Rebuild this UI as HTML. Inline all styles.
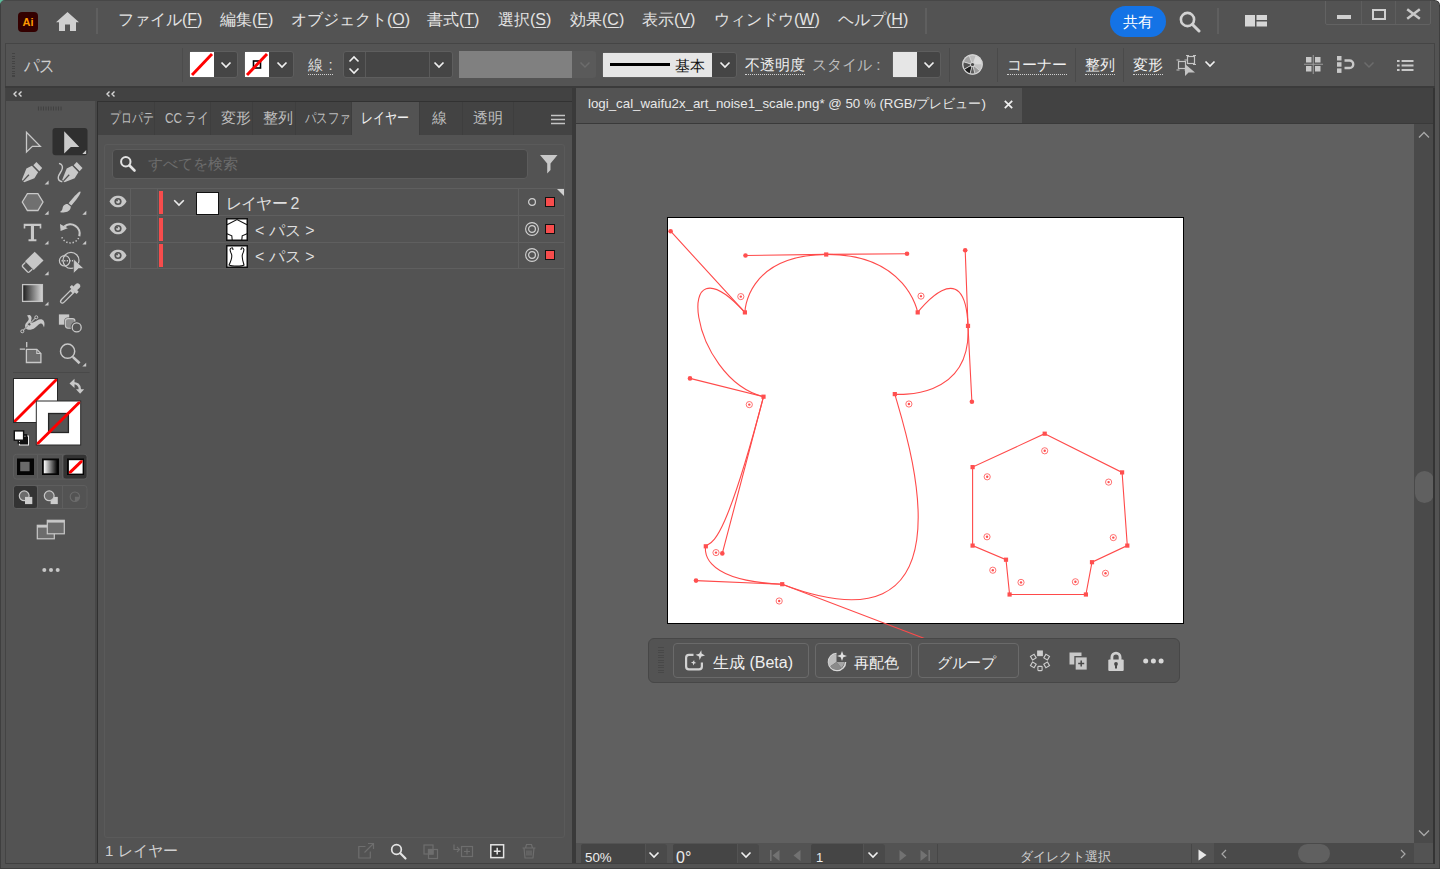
<!DOCTYPE html>
<html lang="ja">
<head>
<meta charset="utf-8">
<title>Adobe Illustrator</title>
<style>
*{box-sizing:border-box;margin:0;padding:0}
html,body{width:1440px;height:869px;overflow:hidden;background:#535353}
body{font-family:"Liberation Sans",sans-serif;color:#d6d6d6;font-size:15px;position:relative}
.abs{position:absolute}
#win{position:absolute;left:0;top:0;width:1440px;height:869px;background:#535353;overflow:hidden}
/* menu bar */
#menubar{position:absolute;left:0;top:0;width:1440px;height:43px;background:#535353}
.mi{position:absolute;top:9px;height:22px;line-height:22px;font-size:16px;color:#e4e4e4;white-space:nowrap}
.mi u{text-decoration:underline;text-underline-offset:2px}
/* control bar */
#ctrl{position:absolute;left:5px;top:43px;width:1430px;height:43px;background:#545454;border-top:1px solid #454545;border-left:1px solid #464646}
.ct{position:absolute;white-space:nowrap;font-size:15px;line-height:20px;height:20px;top:11px;color:#e6e6e6}
.dot{border-bottom:1px dotted #d0d0d0;padding-bottom:1px}
.dd{position:absolute;background:#454545}
.vsep{position:absolute;width:1px;background:#4a4a4a}
/* docks */
#dockhead{position:absolute;left:5px;top:86px;width:568px;height:15px;background:#424242}
#tools{position:absolute;left:6px;top:101px;width:89px;height:763px;background:#535353}
#lpanel{position:absolute;left:98px;top:101px;width:474px;height:763px;background:#535353}
#ptabs{position:absolute;left:0;top:0;width:474px;height:34px;background:#434343}
.pt{position:absolute;top:0;height:34px;line-height:33px;font-size:15px;color:#bdbdbd;white-space:nowrap;overflow:hidden;border-right:1px solid #3e3e3e;padding-left:12px}
.pt.sel{background:#535353;color:#f0f0f0;border-right:none}
/* doc */
#doc{position:absolute;left:576px;top:87px;width:858px;height:777px;background:#606060}
#doctabs{position:absolute;left:0;top:0;width:858px;height:37px;background:#424242;border-bottom:1px solid #3a3a3a}
#doctab{position:absolute;left:0;top:0;width:446px;height:36px;background:#535353;font-size:13.300px;color:#e8e8e8;line-height:34px;padding-left:12px;white-space:nowrap}
#artboard{position:absolute;left:91px;top:130px;width:517px;height:407px;background:#fff;border:1px solid #000}
#status{position:absolute;left:0;top:756px;width:858px;height:21px;background:#535353}
#vscroll{position:absolute;left:838px;top:37px;width:19px;height:719px;background:#4a4a4a}
#hscroll{position:absolute;left:638px;top:756px;width:200px;height:21px;background:#4a4a4a}
.tb{border:1px solid #6a6a6a;border-radius:4px}
.tt{top:13px;font-size:15px;line-height:22px;color:#f0f0f0;white-space:nowrap}
.sf{top:1px;height:20px;background:#454545;border-radius:2px 0 0 0}
.sb{top:1px;width:21px;height:20px;background:#4a4a4a;border-radius:0 3px 0 0}
.st{white-space:nowrap;color:#ececec;line-height:18px}
.sq{display:inline-block;transform-origin:0 50%;white-space:nowrap}
</style>
</head>
<body>
<div id="win">
<div id="menubar">
  <!-- Ai logo -->
  <div class="abs" style="left:18px;top:12px;width:20px;height:20px;border-radius:4px;background:#330000;color:#ff9a00;font-weight:bold;font-size:11px;line-height:20px;text-align:center;letter-spacing:0">Ai</div>
  <!-- home -->
  <svg class="abs" style="left:55px;top:11px" width="25" height="21" viewBox="0 0 25 21"><path d="M12.5 1 L1 11.2 L4 11.2 L4 20 L10 20 L10 13.5 L15 13.5 L15 20 L21 20 L21 11.2 L24 11.2 Z" fill="#cfcfcf"/></svg>
  <div class="vsep" style="left:96px;top:8px;height:26px;width:2px;background:#5f5f5f"></div>
  <div class="mi" style="left:118px">ファイル(<u>F</u>)</div>
  <div class="mi" style="left:220px">編集(<u>E</u>)</div>
  <div class="mi" style="left:291px">オブジェクト(<u>O</u>)</div>
  <div class="mi" style="left:427px">書式(<u>T</u>)</div>
  <div class="mi" style="left:498px">選択(<u>S</u>)</div>
  <div class="mi" style="left:570px">効果(<u>C</u>)</div>
  <div class="mi" style="left:642px">表示(<u>V</u>)</div>
  <div class="mi" style="left:714px">ウィンドウ(<u>W</u>)</div>
  <div class="mi" style="left:838px">ヘルプ(<u>H</u>)</div>
  <div class="vsep" style="left:925px;top:8px;height:26px;width:2px;background:#5f5f5f"></div>
  <!-- share -->
  <div class="abs" style="left:1110px;top:6px;width:56px;height:31px;border-radius:16px;background:#1473e6;color:#fff;font-size:15px;line-height:31px;text-align:center">共有</div>
  <!-- search -->
  <svg class="abs" style="left:1178px;top:10px" width="23" height="23" viewBox="0 0 23 23"><circle cx="9.5" cy="9.5" r="6.6" fill="none" stroke="#d2d2d2" stroke-width="2.6"/><path d="M14.5 14.5 L21 21" stroke="#d2d2d2" stroke-width="3" stroke-linecap="round"/></svg>
  <div class="vsep" style="left:1217px;top:8px;height:26px;width:2px;background:#5f5f5f"></div>
  <!-- workspace -->
  <svg class="abs" style="left:1245px;top:15px" width="22" height="12" viewBox="0 0 22 12"><rect x="0" y="0" width="10" height="11.5" fill="#d6d6d6"/><rect x="11.5" y="0" width="10.5" height="5" fill="#d6d6d6"/><rect x="11.5" y="6.5" width="10.5" height="5" fill="#d6d6d6"/></svg>
  <!-- window controls -->
  <div class="abs" style="left:1325px;top:-2px;width:106px;height:27px;border:1px solid #626262;border-radius:0 0 2px 2px"></div>
  <div class="vsep" style="left:1361px;top:0;height:24px;background:#5e5e5e"></div>
  <div class="vsep" style="left:1395px;top:0;height:24px;background:#5e5e5e"></div>
  <div class="abs" style="left:1337px;top:15px;width:14px;height:4px;background:#cfcfcf"></div>
  <div class="abs" style="left:1372px;top:9px;width:14px;height:11px;border:2.5px solid #cfcfcf"></div>
  <svg class="abs" style="left:1406px;top:8px" width="15" height="12" viewBox="0 0 15 12"><path d="M1.200 1.300L13.800 10.700M13.800 1.300L1.200 10.700" stroke="#c8c8c8" stroke-width="2.500"/></svg>
</div>

<div id="ctrl">
  <!-- grip (coords relative to ctrl: x-6, y-44) -->
  <div class="abs" style="left:6px;top:9px;width:3px;height:24px;background:repeating-linear-gradient(to bottom,#434343 0,#434343 1px,transparent 1px,transparent 2.500px)"></div>
  <div class="ct" style="left:18px;top:11.5px;font-size:17.500px;color:#cdcdcd;transform:scaleX(.86);transform-origin:0 50%">パス</div>
  <div class="vsep" style="left:176px;top:4px;height:34px;background:#4c4c4c"></div>
  <!-- fill swatch -->
  <div class="abs" style="left:183px;top:7px;width:49px;height:27px;border:1px solid #5e5e5e;border-radius:3px;background:#454545"></div>
  <svg class="abs" style="left:184px;top:8px" width="24" height="25" viewBox="0 0 24 25"><rect width="24" height="25" fill="#fff"/><path d="M2 23 L22 2" stroke="#ff0000" stroke-width="2.900"/></svg>
  <svg class="abs" style="left:214px;top:17px" width="12" height="8" viewBox="0 0 12 8"><path d="M1.5 1.5 L6 6 L10.5 1.5" fill="none" stroke="#f0f0f0" stroke-width="1.7"/></svg>
  <!-- stroke swatch -->
  <div class="abs" style="left:238px;top:7px;width:50px;height:27px;border:1px solid #5e5e5e;border-radius:3px;background:#454545"></div>
  <svg class="abs" style="left:239px;top:8px" width="24" height="25" viewBox="0 0 24 25"><rect width="24" height="25" fill="#fff"/><rect x="8.5" y="9" width="7" height="7" fill="none" stroke="#000" stroke-width="1.6"/><path d="M2 23 L22 2" stroke="#ff0000" stroke-width="2.900"/></svg>
  <svg class="abs" style="left:270px;top:17px" width="12" height="8" viewBox="0 0 12 8"><path d="M1.5 1.5 L6 6 L10.5 1.5" fill="none" stroke="#f0f0f0" stroke-width="1.7"/></svg>
  <!-- stroke label -->
  <div class="ct" style="left:302px;top:11px;color:#dedede"><span class="dot">線&nbsp;&#8202;:</span></div>
  <!-- spinner -->
  <div class="abs" style="left:337px;top:7px;width:110px;height:27px;border:1px solid #5e5e5e;border-radius:3px;background:#454545"></div>
  <div class="vsep" style="left:359px;top:8px;height:25px;background:#5a5a5a"></div>
  <div class="vsep" style="left:423px;top:8px;height:25px;background:#5a5a5a"></div>
  <svg class="abs" style="left:342px;top:11px" width="12" height="20" viewBox="0 0 12 20"><path d="M1.5 6.5 L6 2 L10.5 6.5 M1.5 13.5 L6 18 L10.5 13.5" fill="none" stroke="#f0f0f0" stroke-width="1.6"/></svg>
  <svg class="abs" style="left:427px;top:17px" width="12" height="8" viewBox="0 0 12 8"><path d="M1.5 1.5 L6 6 L10.5 1.5" fill="none" stroke="#f0f0f0" stroke-width="1.7"/></svg>
  <!-- gray box -->
  <div class="abs" style="left:453px;top:7px;width:113px;height:27px;background:#808080"></div>
  <div class="abs" style="left:566px;top:7px;width:24px;height:27px;background:#5a5a5a;border-radius:0 3px 3px 0"></div>
  <svg class="abs" style="left:573px;top:17px" width="12" height="8" viewBox="0 0 12 8"><path d="M1.5 1.5 L6 6 L10.5 1.5" fill="none" stroke="#6c6c6c" stroke-width="1.5"/></svg>
  <!-- brush profile -->
  <div class="abs" style="left:596px;top:8px;width:135px;height:26px;border:1px solid #5e5e5e;border-radius:3px;background:#454545"></div>
  <div class="abs" style="left:597px;top:9px;width:109px;height:24px;background:#e6e6e6"></div>
  <div class="abs" style="left:604px;top:19px;width:60px;height:3px;background:#000"></div>
  <div class="ct" style="left:669px;top:12px;color:#111">基本</div>
  <svg class="abs" style="left:713px;top:17px" width="12" height="8" viewBox="0 0 12 8"><path d="M1.5 1.5 L6 6 L10.5 1.5" fill="none" stroke="#f0f0f0" stroke-width="1.7"/></svg>
  <!-- opacity -->
  <div class="ct" style="left:739px;top:11px;color:#efefef"><span class="dot">不透明度</span></div>
  <div class="ct" style="left:806px;top:11px;color:#bdbdbd;font-size:15.3px">スタイル :</div>
  <div class="abs" style="left:886px;top:7px;width:49px;height:27px;border:1px solid #5e5e5e;border-radius:3px;background:#454545"></div>
  <div class="abs" style="left:887px;top:8px;width:24px;height:25px;background:#e6e6e6"></div>
  <svg class="abs" style="left:917px;top:17px" width="12" height="8" viewBox="0 0 12 8"><path d="M1.5 1.5 L6 6 L10.5 1.5" fill="none" stroke="#f0f0f0" stroke-width="1.7"/></svg>
  <div class="vsep" style="left:943px;top:4px;height:34px;background:#4a4a4a"></div>
  <!-- recolor wheel -->
  <svg class="abs" style="left:955px;top:9px" width="23" height="23" viewBox="0 0 23 23">
    <circle cx="11.500" cy="11.500" r="10.300" fill="#c8c8c8"/>
    <g transform="translate(11.500 11.500)">
      <path d="M0 0L-3.300 -9A9.600 9.600 0 0 1 3.300 -9Z" fill="#bcbcbc"/>
      <path d="M0 0L3.300 -9A9.600 9.600 0 0 1 9.600 0Z" fill="#dadada"/>
      <path d="M0 0L9.600 0A9.600 9.600 0 0 1 7.400 6.200Z" fill="#c2c2c2"/>
      <path d="M0 0L7.400 6.200A9.600 9.600 0 0 1 2.500 9.300Z" fill="#9a9a9a"/>
      <path d="M0 0L2.500 9.300A9.600 9.600 0 0 1 -2.500 9.300Z" fill="#5c5c5c"/>
      <path d="M0 0L-2.500 9.300A9.600 9.600 0 0 1 -8.300 4.800Z" fill="#1e1e1e"/>
      <path d="M0 0L-8.300 4.800A9.600 9.600 0 0 1 -9.200 -2.800Z" fill="#505050"/>
      <path d="M0 0L-9.200 -2.800A9.600 9.600 0 0 1 -3.300 -9Z" fill="#a2a2a2"/>
      <path d="M0 0L2.500 9.300M0 0L-2.500 9.300M0 0L-8.300 4.800M0 0L-9.200 -2.800M0 0L-3.300 -9M0 0L7.400 6.200" stroke="#d6d6d6" stroke-width=".9"/>
      <circle r="9.700" fill="none" stroke="#d2d2d2" stroke-width="1.200"/>
      <circle r="2.600" fill="#d0d0d0"/><circle r="1.600" fill="#484848"/>
    </g>
  </svg>
  <div class="vsep" style="left:991px;top:4px;height:34px;background:#4a4a4a"></div>
  <div class="ct" style="left:1001px;top:11px;color:#efefef"><span class="dot">コーナー</span></div>
  <div class="vsep" style="left:1069px;top:4px;height:34px;background:#4a4a4a"></div>
  <div class="ct" style="left:1079px;top:11px;color:#efefef"><span class="dot">整列</span></div>
  <div class="vsep" style="left:1117px;top:4px;height:34px;background:#4a4a4a"></div>
  <div class="ct" style="left:1127px;top:11px;color:#efefef"><span class="dot">変形</span></div>
  <!-- isolate icon -->
  <svg class="abs" style="left:1170px;top:10px" width="22" height="24" viewBox="0 0 22 24">
    <rect x="2.5" y="7.5" width="7" height="7" fill="none" stroke="#c4c4c4" stroke-width="1.2"/>
    <path d="M0.5 6 h3 M0.5 16 h3 M8.5 6 h3 M8.5 16 h3" stroke="#c4c4c4" stroke-width="1"/>
    <rect x="11.5" y="2.5" width="7" height="7" fill="none" stroke="#c4c4c4" stroke-width="1.2"/>
    <path d="M10 1.5 h3 M17 1.5 h3 M17 10.5 h3" stroke="#c4c4c4" stroke-width="1"/>
    <path d="M9 10 L9 22 L12.5 18.5 L19 18.5 Z" fill="#c4c4c4"/>
  </svg>
  <svg class="abs" style="left:1198px;top:16px" width="12" height="8" viewBox="0 0 12 8"><path d="M1.5 1.5 L6 6 L10.5 1.5" fill="none" stroke="#f0f0f0" stroke-width="1.7"/></svg>
  <!-- right icons -->
  <svg class="abs" style="left:1298px;top:11px" width="19" height="19" viewBox="0 0 19 19">
    <rect x="2" y="2" width="5.5" height="5.5" fill="#c8c8c8"/><rect x="11" y="2" width="5.5" height="5.5" fill="#c8c8c8"/>
    <rect x="2" y="11" width="5.5" height="5.5" fill="#c8c8c8"/><rect x="11" y="11" width="5.5" height="5.5" fill="#c8c8c8"/>
    <path d="M9.25 0V19M0 9.25H19" stroke="#9c9c9c" stroke-width="1"/>
  </svg>
  <svg class="abs" style="left:1330px;top:11px" width="20" height="19" viewBox="0 0 20 19">
    <rect x="1" y="1" width="4.5" height="4.5" fill="#c8c8c8"/><rect x="1" y="7.2" width="4.5" height="4.5" fill="#c8c8c8"/><rect x="1" y="13.4" width="4.5" height="4.5" fill="#c8c8c8"/>
    <path d="M8.5 5.5 H13.5 A3.7 3.7 0 0 1 13.5 13 H8.5" fill="none" stroke="#c8c8c8" stroke-width="2.4"/>
  </svg>
  <svg class="abs" style="left:1357px;top:17px" width="12" height="8" viewBox="0 0 12 8"><path d="M1.5 1.5 L6 6 L10.5 1.5" fill="none" stroke="#6c6c6c" stroke-width="1.5"/></svg>
  <svg class="abs" style="left:1391px;top:15px" width="17" height="13" viewBox="0 0 17 13">
    <path d="M0 2H2.6M0 6.5H2.6M0 11H2.6" stroke="#c8c8c8" stroke-width="2"/>
    <path d="M4.6 2H16.5M4.6 6.5H16.5M4.6 11H16.5" stroke="#c8c8c8" stroke-width="2"/>
  </svg>
</div>

<div id="dockhead"></div>
<div class="abs" style="left:5px;top:86px;width:1430px;height:2px;background:#3b3b3b;z-index:3"></div>
<div class="abs" style="left:95px;top:101px;width:2px;height:763px;background:#474747"></div><div class="abs" style="left:97px;top:101px;width:1px;height:763px;background:#303030"></div><div class="abs" style="left:97px;top:101px;width:475px;height:1px;background:#323232;z-index:2"></div>
<div class="abs" style="left:572px;top:87px;width:4px;height:777px;background:#3a3a3a"></div>
<div id="tools"></div>
<svg class="abs" style="left:0;top:86px" width="98" height="520" viewBox="0 86 98 520">
  <defs>
    <linearGradient id="gr1" x1="0" x2="1" y1="0" y2="0"><stop offset="0" stop-color="#1a1a1a"/><stop offset="1" stop-color="#d8d8d8"/></linearGradient>
    <linearGradient id="gr2" x1="0" x2="1" y1="0" y2="0"><stop offset="0" stop-color="#fff"/><stop offset="1" stop-color="#000"/></linearGradient>
  </defs>
  <!-- header chevrons -->
  <path d="M16.5 91.5L14 94L16.5 96.5M21.5 91.5L19 94L21.5 96.5" fill="none" stroke="#d8d8d8" stroke-width="1.4"/>
  <path d="M109 91.5" />
  <!-- grip -->
  <path d="M38.5 106.5V110.5M41 106.500V110.5M43.500 106.5V110.5M46 106.5V110.5M48.500 106.5V110.5M51 106.500V110.5M53.500 106.5V110.5M56 106.5V110.5M58.500 106.5V110.5M61 106.500V110.5" stroke="#414141" stroke-width="1.1"/>
  <!-- 1 selection -->
  <path d="M26.5 132.300V152L32.400 146.300H40.300Z" fill="#5c5c5c" stroke="#c8c8c8" stroke-width="1.3" stroke-linejoin="miter"/>
  <!-- 2 direct selection (selected) -->
  <rect x="52.500" y="128" width="35" height="27.300" rx="3" fill="#2f2f2f"/>
  <path d="M64.200 131.300V153.600L70.800 147H79.300Z" fill="#cbcbcb"/>
  <path d="M82.300 154H86.200V150.100Z" fill="#cbcbcb"/>
  <!-- 3 pen -->
  <g fill="#c8c8c8">
    <path d="M33.300 165.300L36.400 161.900L42.200 168.100L39.300 171.300Z"/>
    <path d="M31.900 165.800L26.400 168.600L21.900 179.700L24.200 182.200L34.400 178.300L38.100 172.200Z"/>
    <path d="M44.600 184.500H48.600V180.500Z"/>
  </g>
  <path d="M32.500 165.200L39 172" stroke="#535353" stroke-width=".9"/>
  <path d="M23.200 180.900L28.900 174.700" stroke="#535353" stroke-width="1.300"/>
  <!-- 4 curvature -->
  <g fill="#c8c8c8">
    <path d="M73.600 165.300L76.700 161.900L82.500 168.100L79.600 171.300Z"/>
    <path d="M72.200 165.800L66.700 168.600L62.200 179.700L64.500 182.200L74.700 178.300L78.400 172.200Z"/>
  </g>
  <path d="M72.800 165.200L79.300 172" stroke="#535353" stroke-width=".9"/>
  <path d="M63.500 180.900L69.200 174.700" stroke="#535353" stroke-width="1.300"/>
  <path d="M59 163.300C61.500 164 62.800 166 62.300 168.500C61.800 171.500 58.800 174 58.300 177C58 179.500 59.800 181.300 62.300 181.700" fill="none" stroke="#c8c8c8" stroke-width="1.400"/>
  <!-- 5 polygon -->
  <path d="M22.300 202L27.400 193.600H37.900L43 202L37.900 210.500H27.400Z" fill="#707070" stroke="#c8c8c8" stroke-width="1.3"/>
  <path d="M44.600 214.800H48.600V210.800Z" fill="#c8c8c8"/>
  <!-- 6 paintbrush -->
  <g fill="#c8c8c8">
    <path d="M80.400 191.600C79 190.800 72 199 68.600 203.200L71.400 205.600C75 201.500 81.800 193.300 80.400 191.600Z"/>
    <path d="M67.600 204C64.200 203.800 62.600 206.600 62.500 208.800C62.300 210.400 60.800 211.400 59.800 211.900C64 213.400 70.800 212.200 70.800 206.600Z"/>
    <path d="M82.300 214.800H86.300V210.800Z"/>
  </g>
  <!-- 7 type -->
  <path d="M23.700 223.700H41.300V228.400H39.700V225.900H34V239.300H36.400V241.300H28.500V239.300H30.900V225.900H25.300V228.400H23.700Z" fill="#c8c8c8"/>
  <path d="M44.600 244.600H48.500V240.700Z" fill="#c8c8c8"/>
  <!-- 8 rotate -->
  <path d="M64.300 226.600A9.300 9.300 0 0 1 79.300 236.200" fill="none" stroke="#c8c8c8" stroke-width="2.200"/>
  <path d="M60 224.100L60.600 231L67.800 228.300Z" fill="#c8c8c8"/>
  <path d="M78.600 238A9.300 9.300 0 0 1 61.500 236.300" fill="none" stroke="#c8c8c8" stroke-width="1.500" stroke-dasharray="1.300 1.900" stroke-linecap="butt"/>
  <path d="M82.300 244.600H86.200V240.700Z" fill="#c8c8c8"/>
  <!-- 9 eraser -->
  <path d="M34.700 251.700L43.500 260.500L33.700 270L25 261.200Z" fill="#c8c8c8"/>
  <path d="M25.400 262.400L22.600 265.200Q22 266 22.600 266.800L27.600 272Q28.400 272.600 29.200 272L32.300 269.200" fill="none" stroke="#c8c8c8" stroke-width="1.300"/>
  <path d="M44.600 275.300H48.600V271.300Z" fill="#c8c8c8"/>
  <!-- 10 shape builder -->
  <circle cx="71" cy="260.400" r="8" fill="none" stroke="#c8c8c8" stroke-width="1.200"/>
  <circle cx="64.600" cy="260.800" r="5.200" fill="none" stroke="#c8c8c8" stroke-width="1.200"/>
  <path d="M61.500 260.800H73" stroke="#c8c8c8" stroke-width="1.400" stroke-dasharray="1.300 1.300"/>
  <path d="M73.600 259V273.300L78.600 268.600H83.800Z" fill="#c8c8c8" stroke="#535353" stroke-width=".6"/>
  <!-- 11 gradient -->
  <rect x="22.600" y="284.600" width="19.800" height="16.800" fill="url(#gr1)" stroke="#c4c4c4" stroke-width="1.300"/>
  <path d="M44.600 305.600H48.500V301.700Z" fill="#c8c8c8"/>
  <!-- 12 eyedropper -->
  <g transform="translate(70 293.650) rotate(45)">
    <rect x="-2.700" y="-13.350" width="5.400" height="8" rx="2.700" fill="#c8c8c8"/>
    <rect x="-4.900" y="-7.600" width="9.800" height="3.300" rx=".8" fill="#c8c8c8"/>
    <rect x="-2.500" y="-4.600" width="5" height="2.600" fill="#c8c8c8"/>
    <path d="M-1.850 -2.400V9.800Q-1.850 12.700 0 12.700Q1.850 12.700 1.850 9.800V-2.400" fill="none" stroke="#c8c8c8" stroke-width="1.300"/>
  </g>
  <!-- 13 puppet/shaper -->
  <path d="M27 315.500C30.500 313.500 32.500 317 31.200 320C30.300 322.200 31.500 323.300 33.500 322.300C36.500 320.800 40.500 317.200 43.500 320.500C45 322.500 44.500 325.500 44 327.500C43.200 325.300 42.500 323.200 40.500 323.600C37.500 324.200 35.500 329.500 30.500 329.800C26.500 330 24.300 327.500 25.300 324.500C26.300 321.800 29.500 320.500 28.500 318C28 316.700 27.500 316 27 315.500Z" fill="#c8c8c8"/>
  <path d="M22.600 331L36 317.500" stroke="#c8c8c8" stroke-width="1.100"/>
  <path d="M22.600 331L36 317.500" stroke="#535353" stroke-width=".5"/>
  <circle cx="22.300" cy="331.300" r="1.500" fill="#535353" stroke="#c8c8c8" stroke-width="1"/>
  <circle cx="36.300" cy="317.300" r="1.500" fill="#535353" stroke="#c8c8c8" stroke-width="1"/>
  <circle cx="29.300" cy="324.300" r="1.700" fill="#535353" stroke="#c8c8c8" stroke-width="1"/>
  <!-- 14 blend -->
  <rect x="58.900" y="314.400" width="10.300" height="10.300" fill="#c8c8c8"/>
  <rect x="65.400" y="318.600" width="9.600" height="9.600" rx="2.600" fill="#8c8c8c" stroke="#535353" stroke-width="2.200"/>
  <rect x="65.400" y="318.600" width="9.600" height="9.600" rx="2.600" fill="#8c8c8c" stroke="#c8c8c8" stroke-width="1.100"/>
  <circle cx="76.700" cy="327.400" r="4.600" fill="#535353" stroke="#535353" stroke-width="3"/>
  <circle cx="76.700" cy="327.400" r="4.500" fill="#535353" stroke="#c8c8c8" stroke-width="1.300"/>
  <!-- 15 artboard -->
  <path d="M26.700 342V347.300M19.800 349.200H25" stroke="#c8c8c8" stroke-width="1.300"/>
  <path d="M26.400 349.400H36.800L40.900 353.500V362.500H26.400Z" fill="#6c6c6c" stroke="#c8c8c8" stroke-width="1.300"/>
  <path d="M36.800 349.400V353.500H40.900" fill="none" stroke="#c8c8c8" stroke-width="1.100"/>
  <!-- 16 zoom -->
  <circle cx="67.600" cy="351.200" r="7.100" fill="none" stroke="#c8c8c8" stroke-width="1.500"/>
  <path d="M72.800 356.900L79.600 363.300" stroke="#c8c8c8" stroke-width="2.600"/>
  <path d="M82.300 366.600H86.200V362.700Z" fill="#c8c8c8"/>
  <!-- separator -->
  <path d="M13 372.500H89.500" stroke="#494949" stroke-width="1"/>
  <!-- fill swatch -->
  <clipPath id="cf"><rect x="14" y="379" width="43" height="43"/></clipPath>
  <clipPath id="cs"><rect x="36.800" y="401.500" width="43.400" height="43"/></clipPath>
  <rect x="13.500" y="378.500" width="44" height="44" fill="#fff" stroke="#2a2a2a" stroke-width="1"/>
  <path d="M13 423L58 378" stroke="#ff0000" stroke-width="2.800" clip-path="url(#cf)"/>
  <!-- stroke swatch -->
  <rect x="36.300" y="401" width="44.400" height="44" fill="#fff" stroke="#2a2a2a" stroke-width="1"/>
  <rect x="48.600" y="413.500" width="19.800" height="19" fill="#555" stroke="#262626" stroke-width="1.300"/>
  <path d="M35.800 445.500L81.200 400.500" stroke="#ff0000" stroke-width="2.800" clip-path="url(#cs)"/>
  <!-- swap arrow -->
  <path d="M71.500 383.200C77 382.500 80 385 80 390" fill="none" stroke="#c8c8c8" stroke-width="2.400"/>
  <path d="M69.500 383.500L74.500 378.800V388Z" fill="#c8c8c8"/>
  <path d="M76 389.200H84.200L80.100 393.800Z" fill="#c8c8c8"/>
  <!-- default fill/stroke -->
  <rect x="19.500" y="436" width="9" height="9" fill="#111" stroke="#eee" stroke-width="1"/>
  <rect x="18.400" y="434.900" width="8" height="8" fill="none" stroke="#111" stroke-width="1.600"/>
  <rect x="14.300" y="430.900" width="9.300" height="9.300" fill="#fff" stroke="#111" stroke-width="1.400"/>
  <!-- color modes -->
  <rect x="13.500" y="454.300" width="73.500" height="24.800" rx="3" fill="none" stroke="#5e5e5e" stroke-width="1"/>
  <rect x="63.500" y="454.800" width="23" height="23.800" rx="2.500" fill="#333"/>
  <path d="M37.500 455V478.500M62.500 455V478.500" stroke="#5e5e5e" stroke-width="1"/>
  <rect x="17" y="458.500" width="17" height="16.500" fill="#050505"/>
  <rect x="20.200" y="461.800" width="9.400" height="9.400" fill="#6a6a6a"/>
  <rect x="42" y="458.500" width="17" height="16.500" fill="#050505"/>
  <rect x="43.800" y="460.300" width="13.600" height="13" fill="url(#gr2)"/>
  <rect x="67" y="458.500" width="17" height="16.500" fill="#050505"/>
  <rect x="68.900" y="460.200" width="13.700" height="13.400" fill="#fff"/>
  <clipPath id="cn"><rect x="68.900" y="460.200" width="13.700" height="13.400"/></clipPath>
  <path d="M68 474.400L83.500 459.400" stroke="#ff0000" stroke-width="3" clip-path="url(#cn)"/>
  <!-- draw modes -->
  <rect x="13.500" y="485.500" width="73.500" height="23" rx="3" fill="none" stroke="#5e5e5e" stroke-width="1"/>
  <rect x="14" y="486" width="23" height="22" rx="2.500" fill="#333"/>
  <path d="M37.500 486V508M62.500 486V508" stroke="#5e5e5e" stroke-width="1"/>
  <circle cx="24.200" cy="495.800" r="4.900" fill="#6c6c6c" stroke="#c8c8c8" stroke-width="1.200"/>
  <rect x="25" y="496.900" width="7.300" height="7.200" fill="#cdcdcd"/>
  <rect x="50.600" y="496.900" width="7.200" height="7.200" fill="#cdcdcd"/>
  <circle cx="49.200" cy="495.800" r="4.900" fill="#6c6c6c" stroke="#c8c8c8" stroke-width="1.200"/>
  <circle cx="74.900" cy="496.700" r="4.700" fill="none" stroke="#6c6c6c" stroke-width="1.100"/>
  <path d="M74.900 496.700H79.600A4.700 4.700 0 0 1 74.900 501.400Z" fill="#6c6c6c"/>
  <!-- screen mode -->
  <rect x="37.300" y="525.300" width="17" height="13.500" fill="#6c6c6c" stroke="#c8c8c8" stroke-width="1.200"/>
  <rect x="47.300" y="520.300" width="17" height="13.500" fill="#6c6c6c" stroke="#c8c8c8" stroke-width="1.200"/>
  <path d="M47.300 521.500H64.300" stroke="#c8c8c8" stroke-width="2.200"/>
  <path d="M37.300 526.500H47" stroke="#c8c8c8" stroke-width="2.200"/>
  <!-- dots -->
  <circle cx="44.300" cy="570" r="2" fill="#c8c8c8"/><circle cx="51" cy="570" r="2" fill="#c8c8c8"/><circle cx="57.700" cy="570" r="2" fill="#c8c8c8"/>
</svg>
<svg class="abs" style="left:100px;top:88px" width="20" height="12" viewBox="100 88 20 12"><path d="M109.500 91.500L107 94L109.500 96.500M114.500 91.500L112 94L114.500 96.500" fill="none" stroke="#d8d8d8" stroke-width="1.400"/></svg>

<div id="lpanel">
  <div id="ptabs">
    <div class="pt" style="left:0;width:57px"><span class="sq" style="transform:scaleX(.725)">プロパテ</span></div>
    <div class="pt" style="left:57px;width:56px;padding-left:10px"><span class="sq" style="transform:scaleX(.79)">CC ライ</span></div>
    <div class="pt" style="left:113px;width:42px;padding-left:10px">変形</div>
    <div class="pt" style="left:155px;width:43px;padding-left:10px">整列</div>
    <div class="pt" style="left:198px;width:56px;padding-left:9px"><span class="sq" style="transform:scaleX(.76)">パスファ</span></div>
    <div class="pt sel" style="left:254px;width:67px;padding-left:9px"><span class="sq" style="transform:scaleX(.8)">レイヤー</span></div>
    <div class="pt" style="left:321px;width:44px;padding-left:12px;border-left:1px solid #3e3e3e">線</div>
    <div class="pt" style="left:365px;width:51px;padding-left:10px">透明</div>
    <svg class="abs" style="left:453px;top:13px" width="14" height="11" viewBox="0 0 14 11"><path d="M0 1.5H14M0 5.5H14M0 9.5H14" stroke="#c4c4c4" stroke-width="1.6"/></svg>
  </div>
  <!-- inner frame -->
  <div class="abs" style="left:6px;top:43px;width:461px;height:694px;border:1px solid #5a5a5a;border-radius:3px"></div>
  <!-- search -->
  <div class="abs" style="left:14px;top:48px;width:416px;height:30px;background:#454545;border:1px solid #5c5c5c;border-radius:4px"></div>
  <svg class="abs" style="left:21px;top:54px" width="18" height="18" viewBox="0 0 18 18"><circle cx="6.8" cy="6.8" r="4.7" fill="none" stroke="#e2e2e2" stroke-width="2"/><path d="M10.5 10.5L15.5 15.5" stroke="#e2e2e2" stroke-width="2.6" stroke-linecap="round"/></svg>
  <div class="abs" style="left:50px;top:52px;font-size:15px;line-height:22px;color:#6c6c6c;white-space:nowrap">すべてを検索</div>
  <svg class="abs" style="left:442px;top:54px" width="18" height="19" viewBox="0 0 18 19"><path d="M0 0H17.5L10.5 8.5V15L7.2 18.5V8.5Z" fill="#c8c8c8"/></svg>
  <!-- layer rows -->
  <div class="abs" style="left:7px;top:87px;width:459px;height:1px;background:#5f5f5f"></div>
  <div class="abs" style="left:7px;top:114px;width:459px;height:1px;background:#5f5f5f"></div>
  <div class="abs" style="left:7px;top:141px;width:459px;height:1px;background:#5f5f5f"></div>
  <div class="abs" style="left:7px;top:167px;width:459px;height:1px;background:#5f5f5f"></div>
  <div class="abs" style="left:32px;top:88px;width:1px;height:79px;background:#5f5f5f"></div>
  <div class="abs" style="left:59px;top:88px;width:1px;height:79px;background:#5f5f5f"></div>
  <div class="abs" style="left:420px;top:88px;width:1px;height:79px;background:#5f5f5f"></div>
  <!-- red bars -->
  <div class="abs" style="left:61px;top:90px;width:4px;height:23px;background:#f74c4c"></div>
  <div class="abs" style="left:61px;top:117px;width:4px;height:23px;background:#f74c4c"></div>
  <div class="abs" style="left:61px;top:143px;width:4px;height:23px;background:#f74c4c"></div>
  <!-- eyes -->
  <svg class="abs" style="left:11px;top:94px" width="18" height="13" viewBox="0 0 18 13"><path d="M0.5 6.5C3 1.8 6 0.8 9 0.8S15 1.8 17.5 6.5C15 11.2 12 12.2 9 12.2S3 11.2 0.5 6.5Z" fill="#c8c8c8"/><circle cx="9" cy="6.5" r="3.6" fill="#535353"/><circle cx="9" cy="6.5" r="1.9" fill="#c8c8c8"/><circle cx="8" cy="5.4" r="1" fill="#535353"/></svg>
  <svg class="abs" style="left:11px;top:121px" width="18" height="13" viewBox="0 0 18 13"><path d="M0.5 6.5C3 1.8 6 0.8 9 0.8S15 1.8 17.5 6.5C15 11.2 12 12.2 9 12.2S3 11.2 0.5 6.5Z" fill="#c8c8c8"/><circle cx="9" cy="6.5" r="3.6" fill="#535353"/><circle cx="9" cy="6.5" r="1.9" fill="#c8c8c8"/><circle cx="8" cy="5.4" r="1" fill="#535353"/></svg>
  <svg class="abs" style="left:11px;top:148px" width="18" height="13" viewBox="0 0 18 13"><path d="M0.5 6.5C3 1.8 6 0.8 9 0.8S15 1.8 17.5 6.5C15 11.2 12 12.2 9 12.2S3 11.2 0.5 6.5Z" fill="#c8c8c8"/><circle cx="9" cy="6.5" r="3.6" fill="#535353"/><circle cx="9" cy="6.5" r="1.9" fill="#c8c8c8"/><circle cx="8" cy="5.4" r="1" fill="#535353"/></svg>
  <!-- chevron -->
  <svg class="abs" style="left:75px;top:98px" width="12" height="8" viewBox="0 0 12 8"><path d="M1.2 1.2L6 6L10.8 1.2" fill="none" stroke="#ececec" stroke-width="1.6"/></svg>
  <!-- thumbs -->
  <div class="abs" style="left:98px;top:91px;width:23px;height:23px;background:#fff;border:1.500px solid #111"></div>
  <svg class="abs" style="left:128px;top:117px" width="22" height="23" viewBox="0 0 22 23"><rect x=".75" y=".75" width="20.5" height="21.5" fill="#fff" stroke="#111" stroke-width="1.5"/><path d="M1 6.800L11 1.500L21 6.800M1 15.800L5.800 17.800L6.200 22M21 15.800L16.200 17.800L15.800 22" fill="none" stroke="#111" stroke-width="1.100"/></svg>
  <svg class="abs" style="left:128px;top:144px" width="22" height="23" viewBox="0 0 22 23"><rect x=".75" y=".75" width="20.5" height="21.5" fill="#fff" stroke="#111" stroke-width="1.5"/><path d="M5.5 3C4 3 3.5 5 5 8C7 11 4.5 17 3 20C6 21.5 16 21.5 18 20C17 17 15 11 17 8C18.5 5 18 3 16.5 3M5.500 3C6.500 2 7 4 7 5M16.5 3C15.5 2 15 4 15 5" fill="none" stroke="#111" stroke-width="1.1"/></svg>
  <div class="abs" style="left:128px;top:92px;font-size:16px;line-height:22px;color:#dedede;white-space:nowrap;letter-spacing:-.8px">レイヤー 2</div>
  <div class="abs" style="left:157px;top:119px;font-size:16px;line-height:22px;color:#dedede;white-space:nowrap">&lt; パス &gt;</div>
  <div class="abs" style="left:157px;top:145px;font-size:16px;line-height:22px;color:#dedede;white-space:nowrap">&lt; パス &gt;</div>
  <!-- targets -->
  <svg class="abs" style="left:426px;top:93px" width="16" height="16" viewBox="0 0 16 16"><circle cx="8" cy="8" r="3.4" fill="none" stroke="#d0d0d0" stroke-width="1.2"/></svg>
  <svg class="abs" style="left:426px;top:120px" width="16" height="16" viewBox="0 0 16 16"><circle cx="8" cy="8" r="3.4" fill="none" stroke="#d0d0d0" stroke-width="1.2"/><circle cx="8" cy="8" r="6.4" fill="none" stroke="#d0d0d0" stroke-width="1.1"/></svg>
  <svg class="abs" style="left:426px;top:146px" width="16" height="16" viewBox="0 0 16 16"><circle cx="8" cy="8" r="3.4" fill="none" stroke="#d0d0d0" stroke-width="1.2"/><circle cx="8" cy="8" r="6.4" fill="none" stroke="#d0d0d0" stroke-width="1.1"/></svg>
  <div class="abs" style="left:447px;top:96px;width:10px;height:10px;background:#f74c4c;border:1px solid #111"></div>
  <div class="abs" style="left:447px;top:123px;width:10px;height:10px;background:#f74c4c;border:1px solid #111"></div>
  <div class="abs" style="left:447px;top:149px;width:10px;height:10px;background:#f74c4c;border:1px solid #111"></div>
  <svg class="abs" style="left:459px;top:88px" width="7" height="7" viewBox="0 0 7 7"><path d="M0 0H7V7Z" fill="#d0d0d0"/></svg>
<svg class="abs" style="left:259px;top:741px" width="180" height="19" viewBox="357 842 180 19">
    <g fill="none" stroke="#6e6e6e" stroke-width="1.200">
      <path d="M365.500 846.500H358.800V858H370.300V851.500"/><path d="M364.500 852.500L373.500 843.500M368 843.500H373.500V849"/>
      <rect x="424" y="845" width="9" height="9"/><rect x="428.500" y="849.500" width="9" height="9"/><rect x="428.500" y="849.500" width="4.500" height="4.500" fill="#6e6e6e"/>
      <path d="M454 844.500V849.500H459.500M457 847L459.500 849.500L457 852"/><rect x="461.500" y="846.500" width="11" height="10"/><path d="M467 848.500V854.500M464 851.500H470"/>
      <path d="M522.500 848H535.500M525.500 848L526.500 844.500H531.500L532.500 848M524 848L525 858H533L534 848M527 850.500V855.500M529 850.500V855.500M531 850.500V855.500"/>
    </g>
    <circle cx="396.500" cy="849.500" r="4.800" fill="none" stroke="#e4e4e4" stroke-width="1.700"/><path d="M400.300 853.300L405.500 858.500" stroke="#e4e4e4" stroke-width="2.200" stroke-linecap="round"/>
    <rect x="490.800" y="844.800" width="12.800" height="12.800" fill="#3a3a3a" stroke="#e4e4e4" stroke-width="1.500"/><path d="M497.200 847.800V854.600M493.800 851.200H500.600" stroke="#e4e4e4" stroke-width="1.500"/>
  </svg>
  <!-- footer -->
  <div class="abs" style="left:7px;top:739px;font-size:15px;line-height:22px;color:#d0d0d0;white-space:nowrap">1 レイヤー</div>
</div>

<div id="doc">
  <div id="doctabs">
    <div id="doctab">logi_cal_waifu2x_art_noise1_scale.png* @ 50 % (RGB/プレビュー)
      <svg class="abs" style="left:428px;top:13px" width="9" height="9" viewBox="0 0 9 9"><path d="M0.800 0.800L8.200 8.200M8.200 0.800L0.800 8.200" stroke="#f0f0f0" stroke-width="1.700"/></svg>
    </div>
  </div>
  <div id="artboard"></div>
  <!-- paths, source coords -->
  <svg class="abs" style="left:0;top:37px" width="838" height="719" viewBox="576 124 838 719">
    <g fill="none" stroke="#ff4a4a" stroke-width="1.100">
      <!-- figure -->
      <path d="M744.900 312.400C744.900 312.400 745.500 255.500 826.100 254.400C907 253.800 917.700 312.400 917.700 312.400C917.700 312.400 965.200 250.200 968 325.900C971.900 401.800 894.800 394.100 894.800 394.100C905.700 432.600 982.200 660.500 782.200 584.200C696 580.600 705.800 546.300 705.800 546.300C711.200 540.300 722.300 553.400 763.500 396.700C690 378.400 670.600 231.200 744.900 312.400Z"/>
      <!-- handles -->
      <path d="M670.600 231.200L744.900 312.400M745.500 255.500L826.100 254.400L907 253.800M965.200 250.200L968 325.900L971.900 401.800M690 378.400L763.500 396.700L722.300 553.400M696 580.600L782.200 584.200L982.200 660.500"/>
      <!-- polygon -->
      <path d="M1044.700 433.700L1122.100 472.400L1127.300 545.600L1092 562.200L1085.900 594.500H1009.600L1006 559.700L972.600 545.600V467.100Z"/>
    </g>
    <g fill="#ff4f4f">
      <!-- anchors -->
      <rect x="824.100" y="252.400" width="4.200" height="4.200"/><rect x="742.800" y="310.300" width="4.200" height="4.200"/><rect x="915.600" y="310.300" width="4.200" height="4.200"/><rect x="965.900" y="323.800" width="4.200" height="4.200"/><rect x="892.700" y="392" width="4.200" height="4.200"/><rect x="761.400" y="394.600" width="4.200" height="4.200"/><rect x="703.700" y="544.200" width="4.200" height="4.200"/><rect x="780.100" y="582.100" width="4.200" height="4.200"/>
      <rect x="1042.600" y="431.600" width="4.200" height="4.200"/><rect x="1120" y="470.300" width="4.200" height="4.200"/><rect x="1125.200" y="543.500" width="4.200" height="4.200"/><rect x="1089.900" y="560.100" width="4.200" height="4.200"/><rect x="1083.800" y="592.400" width="4.200" height="4.200"/><rect x="1007.500" y="592.400" width="4.200" height="4.200"/><rect x="1003.900" y="557.600" width="4.200" height="4.200"/><rect x="970.500" y="543.500" width="4.200" height="4.200"/><rect x="970.500" y="465" width="4.200" height="4.200"/>
      <!-- handle dots -->
      <circle cx="670.600" cy="231.200" r="2.300"/><circle cx="745.500" cy="255.500" r="2.300"/><circle cx="907" cy="253.800" r="2.300"/><circle cx="965.200" cy="250.200" r="2.300"/><circle cx="971.900" cy="401.800" r="2.300"/><circle cx="690" cy="378.400" r="2.300"/><circle cx="722.300" cy="553.400" r="2.300"/><circle cx="696" cy="580.600" r="2.300"/>
      <!-- widget inner dots -->
      <circle cx="740.800" cy="296.600" r="1.200"/><circle cx="921" cy="296.100" r="1.200"/><circle cx="749.300" cy="404.600" r="1.200"/><circle cx="908.900" cy="404" r="1.200"/><circle cx="716" cy="552.600" r="1.200"/><circle cx="779.200" cy="601" r="1.200"/>
      <circle cx="1044.700" cy="450.800" r="1.200"/><circle cx="987.200" cy="476.800" r="1.200"/><circle cx="1108.600" cy="482.100" r="1.200"/><circle cx="987" cy="536.800" r="1.200"/><circle cx="1113.300" cy="537.600" r="1.200"/><circle cx="992.800" cy="570.200" r="1.200"/><circle cx="1105.500" cy="573.300" r="1.200"/><circle cx="1021" cy="582.400" r="1.200"/><circle cx="1075.400" cy="581.800" r="1.200"/>
    </g>
    <g fill="none" stroke="#ff4f4f" stroke-width=".8">
      <circle cx="740.800" cy="296.600" r="3.100"/><circle cx="921" cy="296.100" r="3.100"/><circle cx="749.300" cy="404.600" r="3.100"/><circle cx="908.900" cy="404" r="3.100"/><circle cx="716" cy="552.600" r="3.100"/><circle cx="779.200" cy="601" r="3.100"/>
      <circle cx="1044.700" cy="450.800" r="3.100"/><circle cx="987.200" cy="476.800" r="3.100"/><circle cx="1108.600" cy="482.100" r="3.100"/><circle cx="987" cy="536.800" r="3.100"/><circle cx="1113.300" cy="537.600" r="3.100"/><circle cx="992.800" cy="570.200" r="3.100"/><circle cx="1105.500" cy="573.300" r="3.100"/><circle cx="1021" cy="582.400" r="3.100"/><circle cx="1075.400" cy="581.800" r="3.100"/>
    </g>
  </svg>
  <div class="abs" id="taskbar" style="left:72px;top:551px;width:532px;height:45px;background:#535353;border:1px solid #474747;border-radius:6px">
    <div class="abs" style="left:9px;top:8px;width:6px;height:26px;background:repeating-linear-gradient(to bottom,#484848 0,#484848 1px,transparent 1px,transparent 2.500px)"></div>
    <div class="abs tb" style="left:24px;top:4px;width:136px;height:35px"></div>
    <div class="abs tb" style="left:166px;top:4px;width:97px;height:35px"></div>
    <div class="abs tb" style="left:269px;top:4px;width:101px;height:35px"></div>
    <!-- gen icon -->
    <svg class="abs" style="left:35px;top:11px" width="22" height="22" viewBox="0 0 22 22">
      <path d="M9.500 4.800H5Q2.100 4.800 2.100 7.700V16.400Q2.100 19.300 5 19.300H15Q17.900 19.300 17.900 16.400V12.500" fill="none" stroke="#d2d2d2" stroke-width="2.200"/>
      <path d="M17.300 0.200L17.600 3.600L21 5.600L17.300 6.400L15.600 10L15 6.400L11.600 4.800L15.200 3.700Z" fill="#d8d8d8"/>
      <path d="M10.100 9.900L10.400 11.900L12.300 12.900L10.300 13.400L9.300 15.400L8.800 13.300L6.900 12.400L8.900 11.800Z" fill="#d8d8d8"/>
    </svg>
    <div class="abs tt" style="left:64px;font-size:16px">生成 (Beta)</div>
    <!-- recolor icon -->
    <svg class="abs" style="left:177px;top:11px" width="23" height="23" viewBox="0 0 23 23">
      <path d="M10.500 3.500A8.500 8.500 0 1 0 19.500 12" fill="none" stroke="#d8d8d8" stroke-width="1.600"/>
      <path d="M10.500 12V4.300A7.700 7.700 0 0 0 4 16.500Z" fill="#bdbdbd"/>
      <path d="M10.500 12L4 16.500A7.700 7.700 0 0 0 15.500 18Z" fill="#8a8a8a"/>
      <path d="M10.500 12L15.500 18A7.700 7.700 0 0 0 18.200 12Z" fill="#a5a5a5"/>
      <path d="M16 1L17.300 4.700L21 6L17.300 7.300L16 11L14.700 7.300L11 6L14.700 4.700Z" fill="#e0e0e0"/>
    </svg>
    <div class="abs tt" style="left:205px">再配色</div>
    <div class="abs tt" style="left:288px;letter-spacing:-.4px">グループ</div>
    <!-- repeat icon -->
    <svg class="abs" style="left:380px;top:11px" width="22" height="22" viewBox="0 0 22 22" fill="none" stroke="#cdcdcd" stroke-width="1.100">
      <rect x="8.700" y="1" width="4.600" height="4.600" fill="#cdcdcd"/>
      <rect x="8.900" y="16.400" width="4.200" height="4.200" rx=".6"/>
      <rect x="15.570" y="5.050" width="4.200" height="4.200" transform="rotate(30 17.670 7.150)"/>
      <rect x="15.570" y="12.750" width="4.200" height="4.200" transform="rotate(-30 17.670 14.850)"/>
      <rect x="2.230" y="12.750" width="4.200" height="4.200" transform="rotate(30 4.330 14.850)"/>
      <rect x="2.230" y="5.050" width="4.200" height="4.200" transform="rotate(-30 4.330 7.150)"/>
    </svg>
    <!-- duplicate icon -->
    <svg class="abs" style="left:420px;top:13px" width="20" height="20" viewBox="0 0 20 20">
      <rect x="0.500" y="0.500" width="12" height="12" fill="#c8c8c8"/>
      <rect x="6" y="4.700" width="12.400" height="13.600" fill="#c8c8c8" stroke="#535353" stroke-width="1.400"/>
      <path d="M12.200 8.500V14.500M9.200 11.500H15.200" stroke="#484848" stroke-width="1.500"/>
    </svg>
    <!-- lock -->
    <svg class="abs" style="left:458px;top:11px" width="18" height="22" viewBox="0 0 18 22">
      <path d="M4.900 10V7.200A4.100 4.100 0 0 1 13.100 7.200V10" fill="none" stroke="#d0d0d0" stroke-width="2.800"/>
      <rect x="1.300" y="9.500" width="15.400" height="11.500" rx="1" fill="#d0d0d0"/>
      <circle cx="9" cy="14" r="1.900" fill="#4a4a4a"/><rect x="8" y="14.500" width="2" height="4" fill="#4a4a4a"/>
    </svg>
    <svg class="abs" style="left:494px;top:19px" width="22" height="6" viewBox="0 0 22 6"><circle cx="2.700" cy="3" r="2.500" fill="#d8d8d8"/><circle cx="10.400" cy="3" r="2.500" fill="#d8d8d8"/><circle cx="18.100" cy="3" r="2.500" fill="#d8d8d8"/></svg>
  </div>

  <div id="vscroll">
    <svg class="abs" style="left:4px;top:7px" width="12" height="8" viewBox="0 0 12 8"><path d="M1 6.500L6 1.500L11 6.500" fill="none" stroke="#a8a8a8" stroke-width="1.300"/></svg>
    <svg class="abs" style="left:4px;top:705px" width="12" height="8" viewBox="0 0 12 8"><path d="M1 1.500L6 6.500L11 1.500" fill="none" stroke="#a8a8a8" stroke-width="1.300"/></svg>
    <div class="abs" style="left:1px;top:347px;width:19px;height:32px;border-radius:10px;background:#606060"></div>
  </div>
  <div id="status">
    <div class="abs sf" style="left:5px;width:64px"></div><div class="abs sb" style="left:70px"></div>
    <div class="abs sf" style="left:97px;width:64px"></div><div class="abs sb" style="left:162px"></div>
    <div class="abs sf" style="left:235px;width:52px"></div><div class="abs sb" style="left:288px"></div>
    <div class="abs st" style="left:9px;top:6px;font-size:13.3px">50%</div>
    <div class="abs st" style="left:100px;top:6px;font-size:16px">0°</div>
    <div class="abs st" style="left:240px;top:6px;font-size:13px">1</div>
    <svg class="abs" style="left:72px;top:8px" width="12" height="8" viewBox="0 0 12 8"><path d="M1.500 1.500L6 6L10.500 1.500" fill="none" stroke="#f0f0f0" stroke-width="1.600"/></svg>
    <svg class="abs" style="left:164px;top:8px" width="12" height="8" viewBox="0 0 12 8"><path d="M1.500 1.500L6 6L10.500 1.500" fill="none" stroke="#f0f0f0" stroke-width="1.600"/></svg>
    <svg class="abs" style="left:291px;top:8px" width="12" height="8" viewBox="0 0 12 8"><path d="M1.500 1.500L6 6L10.500 1.500" fill="none" stroke="#f0f0f0" stroke-width="1.600"/></svg>
    <!-- nav -->
    <svg class="abs" style="left:194px;top:7px" width="34" height="11" viewBox="0 0 34 11"><path d="M0.800 0V11" stroke="#727272" stroke-width="1.600"/><path d="M9.500 0V11L2.500 5.500Z" fill="#727272"/><path d="M30.500 0V11L23.500 5.500Z" fill="#727272"/></svg>
    <svg class="abs" style="left:320px;top:7px" width="34" height="11" viewBox="0 0 34 11"><path d="M3.500 0V11L10.500 5.500Z" fill="#727272"/><path d="M24.500 0V11L31.500 5.500Z" fill="#727272"/><path d="M33.200 0V11" stroke="#727272" stroke-width="1.600"/></svg>
    <div class="abs" style="left:361px;top:1px;width:1px;height:20px;background:#474747"></div>
    <div class="abs st" style="left:444px;top:5px;font-size:12.6px;color:#d0d0d0">ダイレクト選択</div>
    <div class="abs" style="left:615px;top:1px;width:1px;height:20px;background:#474747"></div>
    <svg class="abs" style="left:622px;top:6px" width="9" height="12" viewBox="0 0 9 12"><path d="M0.500 0.500V11.500L8.500 6Z" fill="#e8e8e8"/></svg>
  </div>
  <div id="hscroll">
    <svg class="abs" style="left:6px;top:5px" width="8" height="12" viewBox="0 0 8 12"><path d="M6 2L2 6L6 10" fill="none" stroke="#a8a8a8" stroke-width="1.200"/></svg>
    <svg class="abs" style="left:185px;top:5px" width="8" height="12" viewBox="0 0 8 12"><path d="M2 2L6 6L2 10" fill="none" stroke="#a8a8a8" stroke-width="1.200"/></svg>
    <div class="abs" style="left:84px;top:1px;width:32px;height:19px;border-radius:10px;background:#606060"></div>
  </div>

</div>

<!-- window frame -->
<div class="abs" style="left:0;top:0;width:1440px;height:1px;background:#474747"></div>
<div class="abs" style="left:0;top:0;width:1px;height:869px;background:#3f3f3f"></div>
<div class="abs" style="left:1439px;top:0;width:1px;height:869px;background:#3f3f3f"></div>
<div class="abs" style="left:0;top:868px;width:1440px;height:1px;background:#3f3f3f"></div>
<div class="abs" style="left:1px;top:864px;width:1438px;height:4px;background:#535353"></div>
<div class="abs" style="left:5px;top:863px;width:1430px;height:1px;background:#404040"></div>
<div class="abs" style="left:5px;top:44px;width:1px;height:820px;background:#444"></div>
<div class="abs" style="left:1433px;top:88px;width:2px;height:776px;background:#343434"></div><div class="abs" style="left:1434px;top:44px;width:1px;height:44px;background:#444"></div>
<div class="abs" style="left:1435px;top:1px;width:4px;height:867px;background:#535353"></div>
<svg class="abs" style="left:0;top:0" width="5" height="5" viewBox="0 0 5 5"><path d="M0 0H5A5 5 0 0 0 0 5Z" fill="#5dbd9d"/></svg>
<svg class="abs" style="left:1432px;top:0" width="8" height="8" viewBox="0 0 8 8"><path d="M8 0H1A7 7 0 0 1 8 7Z" fill="#1e1e1e"/><path d="M8 0H2.500A5.500 5.500 0 0 1 8 5.500Z" fill="#fff"/></svg>

</div>
</body>
</html>
